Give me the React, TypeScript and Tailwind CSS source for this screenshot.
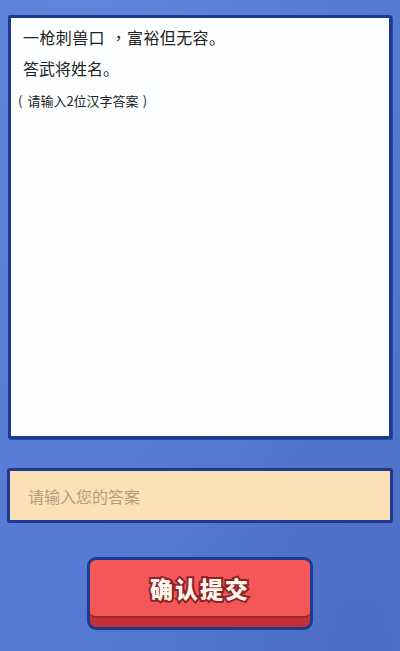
import React from 'react';

const font = "font-['Noto_Sans_CJK_SC','Noto_Sans',sans-serif]";

const App: React.FC = () => {
  return (
    <div
      className={`w-full h-[651px] overflow-hidden flex flex-col px-2 pt-[15px] bg-[#5679d3] bg-[radial-gradient(ellipse_at_20%_0%,#5f85dc_0%,#5a7fd8_40%,transparent_70%),radial-gradient(ellipse_at_90%_100%,#4c6fc4_0%,transparent_60%)] ${font}`}
    >
      <div className="h-[424px] border-[3px] border-[#1c3a8e] bg-[#fcfeff] rounded-[2px] pl-3 pt-[7px] text-[#222] shadow-[1px_1px_0_#2a4aa0]">
        <p className="text-[16px] leading-[24px] tracking-[0.4px]">
          一枪刺兽口
          <span className="inline-block w-[22px] text-right font-['Noto_Sans_CJK_TC',sans-serif]">，</span>
          富裕但无容。
        </p>
        <p className="mt-[7px] text-[16px] leading-[24px]">答武将姓名。</p>
        <p className="mt-[12px] -ml-[5px] text-[13px] leading-[18px]">
          <span className="mr-[5px]">(</span>请输入2位汉字答案<span className="ml-[4px]">)</span>
        </p>
      </div>

      <div className="mt-[29px] -mx-px h-[55px] border-[3px] border-[#1c3a8e] bg-[#fde0b5] rounded-[3px] flex items-center pl-[18px]">
        <input
          className={`w-full bg-transparent outline-none text-[16px] text-[#5a4630] placeholder:text-[#b59c7f] ${font}`}
          placeholder="请输入您的答案"
        />
      </div>

      <div className="mt-[34px] flex justify-center">
        <button className="w-[226px] h-[73px] border-[3px] border-[#1c3a8e] rounded-[9px] bg-[#c3303a] overflow-hidden flex flex-col">
          <div className="h-[58px] bg-[#f35757] rounded-b-[6px] border-b-2 border-[#9e2430] flex items-center justify-center">
            <span
              className={`text-[23px] font-black tracking-[2px] text-[#fff6ec] [paint-order:stroke_fill] [-webkit-text-stroke:4px_#8e2228] ${font}`}
            >
              确认提交
            </span>
          </div>
        </button>
      </div>
    </div>
  );
};

export default App;
